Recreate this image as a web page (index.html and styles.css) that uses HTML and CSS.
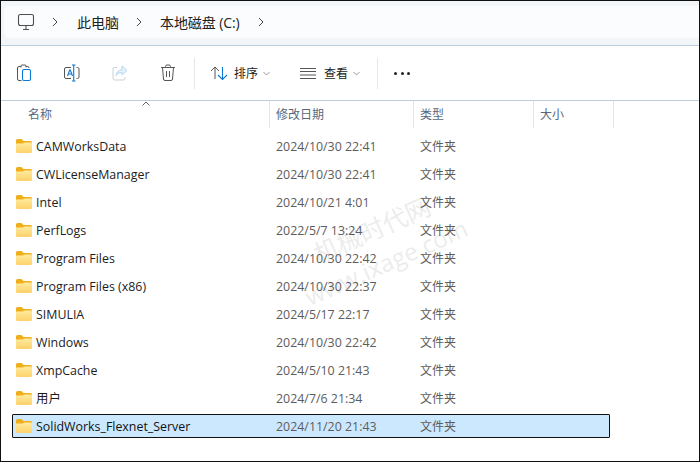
FILE: index.html
```html
<!DOCTYPE html>
<html lang="zh-CN">
<head>
<meta charset="utf-8">
<title>本地磁盘 (C:)</title>
<link rel="stylesheet" href="styles.css">
</head>
<body>
<div class="window">
  <nav class="address">
    <div class="pill">
      <svg class="pc" width="18" height="18" viewBox="0 0 18 18" fill="none" stroke="#4d4f52" stroke-width="1.1"><rect x="1.5" y="1.5" width="15" height="11" rx="2"/><path d="M9 12.5v3.5M6 16.5h6" /></svg>
      <svg class="chev" width="6" height="10" viewBox="0 0 6 10" fill="none" stroke="#444" stroke-width="1"><path d="M1 1l4 4-4 4"/></svg>
      <span class="crumb crumb-a">此电脑</span>
      <svg class="chev" width="6" height="10" viewBox="0 0 6 10" fill="none" stroke="#444" stroke-width="1"><path d="M1 1l4 4-4 4"/></svg>
      <span class="crumb crumb-b">本地磁盘 (C:)</span>
      <svg class="chev" width="6" height="10" viewBox="0 0 6 10" fill="none" stroke="#444" stroke-width="1"><path d="M1 1l4 4-4 4"/></svg>
    </div>
  </nav>
  <div class="toolbar">
    <svg class="tool t1" width="16" height="18" viewBox="0 0 16 18" fill="none"><path d="M5 2.500H3a1.500 1.500 0 0 0-1.500 1.500v11A1.500 1.500 0 0 0 3 16.500h2.500M5 3.500V2a1 1 0 0 1 1-1h3a1 1 0 0 1 1 1v1.500M10 2.500h1.500a1.500 1.500 0 0 1 1.500 1.500" stroke="#555"/><rect x="6.500" y="5.500" width="8" height="11" rx="1.500" stroke="#0a78d4" stroke-width="1.100"/></svg>
    <svg class="tool t2" width="18" height="18" viewBox="0 0 18 18" fill="none"><path d="M8 3.500H3A1.500 1.500 0 0 0 1.500 5v8A1.500 1.500 0 0 0 3 14.500h5M13.500 3.500h1A1.500 1.500 0 0 1 16 5v8a1.500 1.500 0 0 1-1.500 1.500h-1" stroke="#555"/><path d="M9 1h3.500M10.700 1v16M9 17h3.500M4.500 12l2.200-6h.600l2.200 6M5.300 10h3.400" stroke="#0a78d4" stroke-width="1.100"/></svg>
    <svg class="tool t3" width="16" height="16" viewBox="0 0 16 16" fill="none"><path d="M5 2.500H2.500a1.500 1.500 0 0 0-1.500 1.500v9.500a1.500 1.500 0 0 0 1.500 1.500h9a1.500 1.500 0 0 0 1.500-1.500V12" stroke="#cdcfd1"/><path d="M10 1l5 4.500-5 4.500V7.500c-3 0-4.500 1-6 3 .4-3.500 2.500-5.500 6-6z" stroke="#b5d8f5" fill="#e3f1fb"/></svg>
    <svg class="tool t4" width="16" height="18" viewBox="0 0 16 18" fill="none" stroke="#555"><path d="M1 3.500h14M5.500 3.500V2.500a1.500 1.500 0 0 1 1.500-1.500h2a1.500 1.500 0 0 1 1.500 1.500v1M2.500 3.500l1 11.500a1.500 1.500 0 0 0 1.500 1.500h6a1.500 1.500 0 0 0 1.500-1.500l1-11.500M6.500 7v6M9.500 7v6"/></svg>
    <span class="sep sep-a"></span>
    <svg class="tool t5" width="17" height="14" viewBox="0 0 17 14" fill="none"><path d="M1 5l4-4 4 4M5 1v12" stroke="#555"/><path d="M8 9l4.500 4.500L17 9M12.500 13V1" stroke="#0a78d4" stroke-width="1.100"/></svg>
    <span class="tool-label">排序</span>
    <svg class="caret" width="7" height="5" viewBox="0 0 7 5" fill="none" stroke="#999"><path d="M.5 1l3 3 3-3"/></svg>
    <svg class="tool t6" width="16" height="11" viewBox="0 0 16 11" fill="none" stroke="#555"><path d="M0 .5h16M0 3.500h16M0 7h16M0 10.500h16"/></svg>
    <span class="tool-label label-view">查看</span>
    <svg class="caret" width="7" height="5" viewBox="0 0 7 5" fill="none" stroke="#999"><path d="M.5 1l3 3 3-3"/></svg>
    <span class="sep sep-b"></span>
    <span class="dots"><i></i><i></i><i></i></span>
  </div>
  <div class="header">
    <svg class="sort" width="8" height="5" viewBox="0 0 8 5" fill="none" stroke="#666"><path d="M.5 4.500L4 1l3.500 3.500"/></svg>
    <div class="hcol h-name">名称</div>
    <div class="hcol h-date">修改日期</div>
    <div class="hcol h-type">类型</div>
    <div class="hcol h-size">大小</div>
  </div>
  <div class="list">
    <div class="row"><svg class="folder" viewBox="0 0 16 14"><use href="#fld"/></svg><span class="name">CAMWorksData</span><span class="date">2024/10/30 22:41</span><span class="type">文件夹</span></div>
    <div class="row"><svg class="folder" viewBox="0 0 16 14"><use href="#fld"/></svg><span class="name">CWLicenseManager</span><span class="date">2024/10/30 22:41</span><span class="type">文件夹</span></div>
    <div class="row"><svg class="folder" viewBox="0 0 16 14"><use href="#fld"/></svg><span class="name">Intel</span><span class="date">2024/10/21 4:01</span><span class="type">文件夹</span></div>
    <div class="row"><svg class="folder" viewBox="0 0 16 14"><use href="#fld"/></svg><span class="name">PerfLogs</span><span class="date">2022/5/7 13:24</span><span class="type">文件夹</span></div>
    <div class="row"><svg class="folder" viewBox="0 0 16 14"><use href="#fld"/></svg><span class="name">Program Files</span><span class="date">2024/10/30 22:42</span><span class="type">文件夹</span></div>
    <div class="row"><svg class="folder" viewBox="0 0 16 14"><use href="#fld"/></svg><span class="name">Program Files (x86)</span><span class="date">2024/10/30 22:37</span><span class="type">文件夹</span></div>
    <div class="row"><svg class="folder" viewBox="0 0 16 14"><use href="#fld"/></svg><span class="name">SIMULIA</span><span class="date">2024/5/17 22:17</span><span class="type">文件夹</span></div>
    <div class="row"><svg class="folder" viewBox="0 0 16 14"><use href="#fld"/></svg><span class="name">Windows</span><span class="date">2024/10/30 22:42</span><span class="type">文件夹</span></div>
    <div class="row"><svg class="folder" viewBox="0 0 16 14"><use href="#fld"/></svg><span class="name">XmpCache</span><span class="date">2024/5/10 21:43</span><span class="type">文件夹</span></div>
    <div class="row"><svg class="folder" viewBox="0 0 16 14"><use href="#fld"/></svg><span class="name">用户</span><span class="date">2024/7/6 21:34</span><span class="type">文件夹</span></div>
    <div class="row selected"><svg class="folder" viewBox="0 0 16 14"><use href="#fld"/></svg><span class="name">SolidWorks_Flexnet_Server</span><span class="date">2024/11/20 21:43</span><span class="type">文件夹</span></div>
  </div>
  <div class="watermark"><div>机械时代网</div><div class="wm-url">www.ixage.com</div></div>
  <svg class="defs" width="0" height="0"><defs>
    <linearGradient id="fg" x1="0" y1="0" x2="0" y2="1"><stop offset="0" stop-color="#ffe9a0"/><stop offset="1" stop-color="#fcd268"/></linearGradient>
    <g id="fld"><path d="M0 1.500A1.500 1.500 0 0 1 1.500 0h4L7.500 2H14.500A1.500 1.500 0 0 1 16 3.500V5H0z" fill="#f0ae1a"/><path d="M0 4.500L7 4.500 8 3.500H14.800A1.200 1.200 0 0 1 16 4.700V12.800A1.200 1.200 0 0 1 14.800 14H1.200A1.200 1.200 0 0 1 0 12.800z" fill="url(#fg)"/></g>
  </defs></svg>
</div>
</body>
</html>
```
FILE: styles.css
```css
* { box-sizing: border-box; }
html, body { margin: 0; padding: 0; background: #fff; }
body {
  width: 700px;
  height: 462px;
  overflow: hidden;
  font-family: "Open Sans", "Noto Sans CJK SC", sans-serif;
  font-size: 12px;
  color: #1a1a1a;
}
.window {
  position: relative;
  width: 700px;
  height: 462px;
  border: 1px solid #111;
  overflow: hidden;
  background: #fff;
}
.address {
  height: 45px;
  padding: 5px 0 7px 3px;
  background: #f3f6f9;
  border-bottom: 1px solid #bccddd;
}
.pill {
  height: 32px;
  background: #fbfcfe;
  border-radius: 6px 0 0 6px;
  display: flex;
  align-items: center;
  padding-left: 13px;
}
.pc { margin-right: 17px; }
.crumb { font-size: 14px; color: #222; white-space: nowrap; margin-top: -1px; }
.crumb-a { margin-left: 19px; margin-right: 17px; }
.crumb-b { margin-left: 18px; margin-right: 18px; letter-spacing: -.1px; }
.toolbar {
  height: 55px;
  display: flex;
  align-items: center;
  border-bottom: 1px solid #bccddd;
  padding: 0 0 0 15px;
}
.tool { flex: none; }
.t2 { margin-left: 31px; }
.t3 { margin-left: 31px; }
.t4 { margin-left: 32px; }
.sep { width: 1px; height: 31px; background: #e6e6e6; flex: none; }
.sep-a { margin-left: 18px; }
.t5 { margin-left: 15px; }
.tool-label { margin-left: 7px; font-size: 12px; color: #222; }
.label-view { margin-left: 8px; }
.caret { margin-left: 5px; flex: none; }
.t6 { margin-left: 30px; }
.sep-b { margin-left: 17px; }
.dots { display: flex; gap: 3.500px; margin-left: 16px; }
.dots i { width: 3px; height: 3px; border-radius: 50%; background: #222; display: block; }
.header {
  position: relative;
  display: grid;
  grid-template-columns: 269px 144px 120px 80px;
  height: 27px;
  width: 613px;
}
.sort { position: absolute; left: 141px; top: 0; }
.hcol {
  height: 27px;
  line-height: 27px;
  color: #56687c;
  font-size: 12px;
  padding-left: 6px;
  border-right: 1px solid #e3e5e8;
}
.h-name { padding-left: 27px; }
.list { display: flex; flex-direction: column; padding: 4px 0 0 11px; }
.row {
  display: grid;
  grid-template-columns: 3px 16px 240px 144px 1fr;
  width: 598px;
  height: 28px;
  align-items: center;
  border: 0 solid transparent;
  border-width: 0 1px;
}
.row .folder { grid-column: 2; width: 16px; height: 14px; display: block; margin-top: -1px; }
.name { padding-left: 4px; color: #1c1c1c; white-space: nowrap; font-size: 12.400px; }
.date { padding-left: 4px; color: #5c5c5c; white-space: nowrap; font-size: 12.400px; }
.type { color: #5c5c5c; padding-left: 4px; }
.selected {
  height: 24px;
  margin-top: 2px;
  background: #cce8ff;
  border: 1px solid #111;
  border-radius: 1px;
}
.selected .name { color: #111; }
.watermark {
  position: absolute;
  left: 278px;
  top: 209px;
  width: 200px;
  color: #000;
  opacity: .07;
  transform: rotate(-24deg);
  text-align: center;
  font-size: 25px;
  line-height: 36px;
  pointer-events: none;
  white-space: nowrap;
}
.wm-url { font-size: 24px; }
.defs { position: absolute; }
```
